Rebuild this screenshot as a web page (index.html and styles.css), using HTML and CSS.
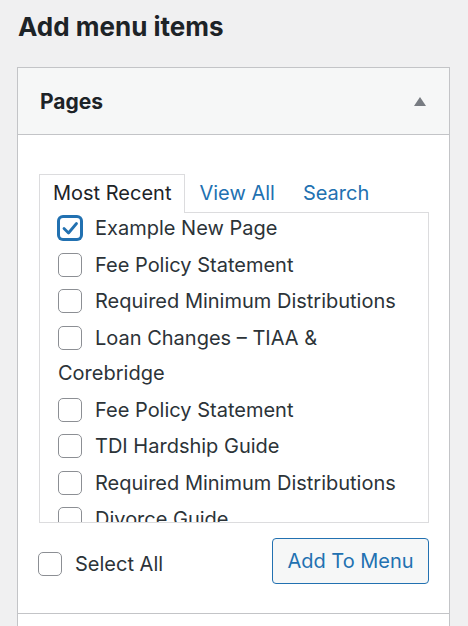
FILE: index.html
```html
<!DOCTYPE html>
<html lang="en">
<head>
<meta charset="utf-8">
<title>Add menu items</title>
<link rel="stylesheet" href="styles.css">
</head>
<body>
<h2 class="title">Add menu items</h2>
<div class="panel">
  <div class="panel-head">
    <h3 class="panel-title">Pages</h3>
    <span class="arrow"></span>
  </div>
  <div class="panel-body">
    <ul class="tabs">
      <li class="tab active">Most Recent</li>
      <li class="tab"><a href="#">View All</a></li>
      <li class="tab"><a href="#">Search</a></li>
    </ul>
    <div class="list">
      <ul class="items">
        <li class="item"><span class="cb checked"><svg viewBox="0 0 24 24" width="24" height="24"><polyline points="6,12.5 10.5,17 18.5,7.5" fill="none" stroke="#2271b1" stroke-width="2.8" stroke-linecap="round" stroke-linejoin="round"/></svg></span>Example New Page</li>
        <li class="item"><span class="cb"></span>Fee Policy Statement</li>
        <li class="item"><span class="cb"></span>Required Minimum Distributions</li>
        <li class="item"><span class="cb"></span>Loan Changes – TIAA &amp; Corebridge</li>
        <li class="item"><span class="cb"></span>Fee Policy Statement</li>
        <li class="item"><span class="cb"></span>TDI Hardship Guide</li>
        <li class="item"><span class="cb"></span>Required Minimum Distributions</li>
        <li class="item"><span class="cb"></span>Divorce Guide</li>
      </ul>
    </div>
    <div class="actions">
      <label class="select-all"><span class="cb"></span>Select All</label>
      <button class="btn" type="button">Add To Menu</button>
    </div>
  </div>
  <div class="panel-next"></div>
</div>
</body>
</html>
```
FILE: styles.css
```css
html, body {
  margin: 0;
  padding: 0;
  background: #f0f0f1;
}
body {
  padding: 0 18px 0 17px;
  font-family: "Inter", "Noto Sans", sans-serif;
  color: #1d2327;
  overflow: hidden;
  height: 626px;
}
.title {
  margin: 12px 0 25px 1px;
  font-size: 26px;
  line-height: 30px;
  font-weight: 700;
}
.panel {
  border: 1px solid #c3c4c7;
  background: #fff;
}
.panel-head {
  height: 66px;
  background: #f6f7f7;
  border-bottom: 1px solid #c3c4c7;
  display: flex;
  align-items: center;
  justify-content: space-between;
  padding: 0 23px 0 22px;
}
.panel-title {
  margin: 0;
  font-size: 21px;
  font-weight: 700;
}
.arrow {
  width: 0;
  height: 0;
  border-left: 6px solid transparent;
  border-right: 6px solid transparent;
  border-bottom: 9px solid #787c82;
}
.panel-body {
  padding: 39px 20px 29px 21px;
}
.tabs {
  list-style: none;
  margin: 0 0 -1px 0;
  padding: 0;
  display: flex;
  position: relative;
  z-index: 1;
}
.tab {
  height: 37px;
  line-height: 37px;
  padding: 0 13px;
  font-size: 20px;
  border: 1px solid transparent;
  border-bottom: none;
}
.tab.active {
  border-color: #dcdcde;
  background: #fff;
  height: 38px;
}
.tab a {
  color: #2271b1;
  text-decoration: none;
}
.list {
  border: 1px solid #dcdcde;
  height: 309px;
  overflow: hidden;
}
.items {
  list-style: none;
  margin: -2px 0 0 0;
  padding: 0 18px;
}
.item {
  font-size: 20px;
  line-height: 35.5px;
  margin-bottom: 1px;
  color: #2c3338;
}
.cb {
  display: inline-block;
  box-sizing: border-box;
  width: 24px;
  height: 24px;
  border: 1px solid #8c8f94;
  border-radius: 5px;
  vertical-align: -5px;
  margin-right: 13px;
  background: #fff;
}
.cb.checked {
  border: 2px solid #2271b1;
  box-shadow: 0 0 0 1px #2271b1;
  position: relative;
}
.cb.checked svg {
  position: absolute;
  left: -2px;
  top: -2px;
}
.actions {
  display: flex;
  justify-content: space-between;
  align-items: center;
  margin-top: 15px;
}
.select-all {
  font-size: 20px;
  line-height: 24px;
  display: flex;
  align-items: center;
  padding-top: 5px;
  margin-left: -1px;
  color: #2c3338;
}
.select-all .cb {
  margin-right: 13px;
}
.btn {
  height: 46px;
  width: 157px;
  border: 1px solid #2271b1;
  border-radius: 4px;
  background: #f6f7f7;
  color: #2271b1;
  font-family: inherit;
  font-size: 20px;
  padding: 0;
}
.panel-next {
  border-top: 1px solid #c3c4c7;
  height: 40px;
}
```
